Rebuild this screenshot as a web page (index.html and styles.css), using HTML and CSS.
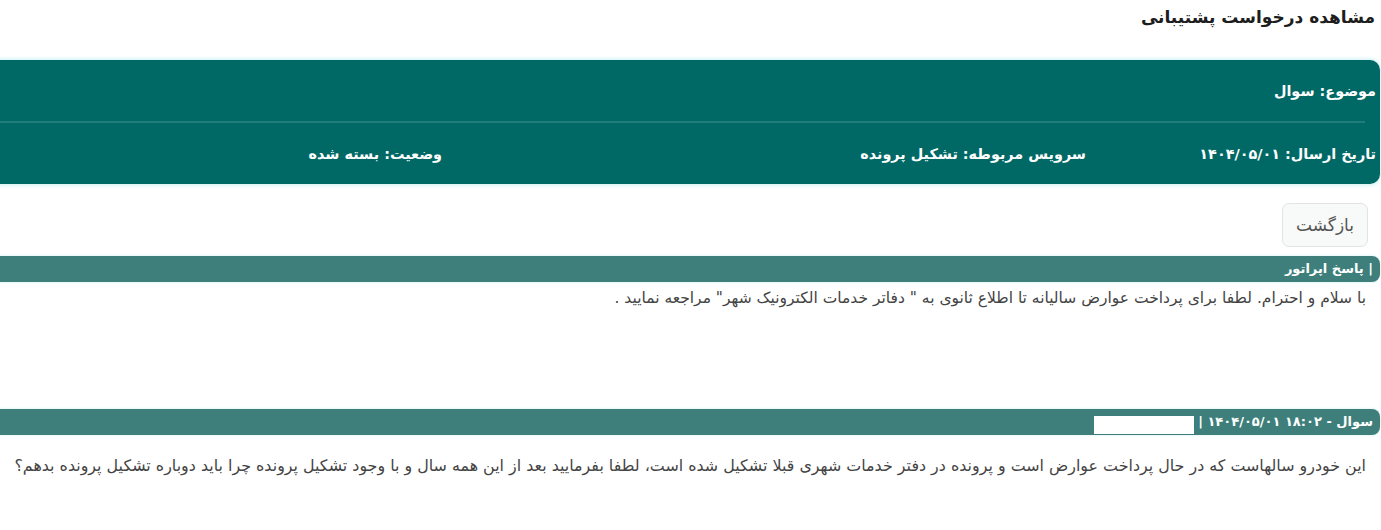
FILE: index.html
```html
<!DOCTYPE html>
<html lang="fa" dir="rtl">
<head>
<meta charset="utf-8">
<title>مشاهده درخواست پشتیبانی</title>
<link rel="stylesheet" href="styles.css">
</head>
<body>
<div class="page">
  <h1 class="title">مشاهده درخواست پشتیبانی</h1>

  <div class="ticket-card">
    <div class="card-row">
      <div class="cell">موضوع: سوال</div>
    </div>
    <div class="divider"></div>
    <div class="card-row">
      <div class="cell cell-date">تاریخ ارسال: ۱۴۰۴/۰۵/۰۱</div>
      <div class="cell cell-service">سرویس مربوطه: تشکیل پرونده</div>
      <div class="cell">وضعیت: بسته شده</div>
    </div>
  </div>

  <div class="actions">
    <button class="btn-back" type="button">بازگشت</button>
  </div>

  <div class="message reply">
    <div class="msg-bar">| پاسخ اپراتور</div>
    <p class="msg-text">با سلام و احترام. لطفا برای پرداخت عوارض سالیانه تا اطلاع ثانوی به " دفاتر خدمات الکترونیک شهر" مراجعه نمایید .</p>
  </div>

  <div class="message question">
    <div class="msg-bar">سوال - ۱۸:۰۲ ۱۴۰۴/۰۵/۰۱ | <span class="redacted"></span></div>
    <p class="msg-text">این خودرو سالهاست که در حال پرداخت عوارض است و پرونده در دفتر خدمات شهری قبلا تشکیل شده است، لطفا بفرمایید بعد از این همه سال و با وجود تشکیل پرونده چرا باید دوباره تشکیل پرونده بدهم؟</p>
  </div>
</div>
</body>
</html>
```

FILE: styles.css
```css
html, body {
  margin: 0;
  padding: 0;
  background: #ffffff;
}

body {
  direction: rtl;
  font-family: "DejaVu Sans", "Noto Sans", sans-serif;
  color: #333;
  overflow: hidden;
}

.page {
  margin-right: 1px;
  margin-left: -30px;
}

.title {
  margin: 0;
  padding: 4px 5px 0 0;
  height: 55px;
  box-sizing: border-box;
  font-size: 17px;
  font-weight: bold;
  color: #1d1d1d;
  line-height: 26px;
}

.ticket-card {
  background: #006966;
  border-radius: 10px;
  box-shadow: 0 0 4px 1px #c9f1f1;
  color: #ffffff;
  margin-top: 5px;
}

.card-row {
  display: flex;
  align-items: center;
  height: 61px;
  padding-right: 4px;
  font-size: 14.4px;
  font-weight: bold;
}

.cell-date {
  width: 290px;
}

.cell-service {
  width: 644px;
}

.divider {
  height: 2px;
  background: #1f7d7a;
  margin-right: 15px;
}

.actions {
  display: flex;
  padding: 19px 12px 0 0;
  height: 72px;
  box-sizing: border-box;
}

.btn-back {
  font-family: inherit;
  font-size: 17px;
  color: #555;
  background: #f8f9f9;
  border: 1px solid #e2e4e4;
  border-radius: 7px;
  width: 86px;
  height: 44px;
  padding: 0;
  cursor: pointer;
}

.msg-bar {
  background: #3e7f7b;
  color: #ffffff;
  border-radius: 8px;
  height: 26px;
  line-height: 26px;
  padding-right: 7px;
  font-size: 13px;
  font-weight: bold;
  box-shadow: 0 0 3px #cdeeee;
}

.msg-text {
  margin: 0;
  padding: 4px 14px 0 0;
  font-size: 15.5px;
  color: #444;
  line-height: 24px;
}

.question .msg-text {
  padding-top: 19px;
  font-size: 15.9px;
}

.reply {
  height: 153px;
}

.redacted {
  display: inline-block;
  width: 100px;
  height: 18px;
  background: #ffffff;
  vertical-align: -8px;
}
```
